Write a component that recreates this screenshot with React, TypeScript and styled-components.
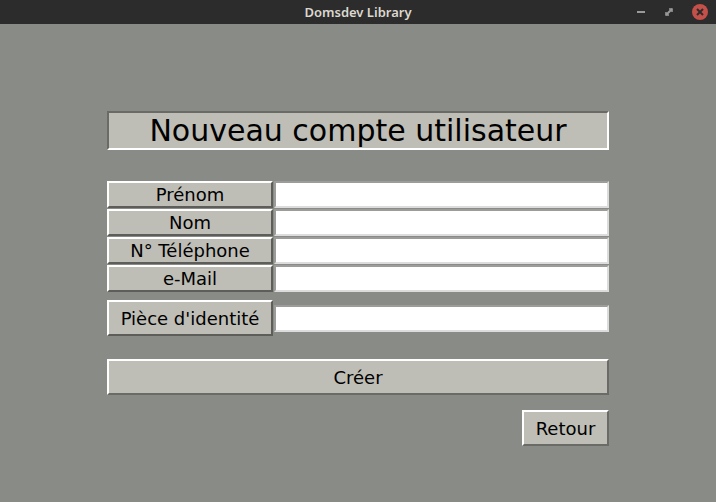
import styled, { createGlobalStyle } from "styled-components";

const GlobalStyle = createGlobalStyle`
  html, body {
    margin: 0;
    padding: 0;
    background: #898c86;
  }
  body {
    font-family: "DejaVu Sans", "Liberation Sans", sans-serif;
  }
`;

const Window = styled.div`
  width: 716px;
  height: 502px;
  display: flex;
  flex-direction: column;
  background: #898c86;
  overflow: hidden;
`;

const TitleBar = styled.div`
  height: 24px;
  background: #2c2c2c;
  display: flex;
  align-items: center;
  justify-content: center;
  position: relative;
  color: #dcd8d0;
  font-family: "Noto Sans", "DejaVu Sans", sans-serif;
  font-size: 13px;
  font-weight: 600;
`;

const Controls = styled.div`
  position: absolute;
  right: 8px;
  top: 0;
  height: 24px;
  display: flex;
  align-items: center;
  gap: 18px;
`;

const Main = styled.div`
  flex: 1;
  display: flex;
  flex-direction: column;
  padding: 87px 0 0 107px;
  width: 502px;
`;

const Heading = styled.div`
  height: 35px;
  border: 2px solid;
  border-color: #6a6b67 #ffffff #ffffff #6a6b67;
  background: #bebdb6;
  display: flex;
  align-items: center;
  justify-content: center;
  font-size: 30px;
  color: #000;
`;

const Fields = styled.div`
  display: flex;
  flex-direction: column;
  gap: 1px;
  margin-top: 31px;
`;

const Row = styled.div<{ $gapTop?: number }>`
  display: flex;
  align-items: center;
  gap: 1px;
  margin-top: ${(p) => p.$gapTop ?? 0}px;
`;

const Label = styled.div<{ $tall?: boolean }>`
  width: 162px;
  height: ${(p) => (p.$tall ? 32 : 23)}px;
  border: 2px solid;
  border-color: #ffffff #5d5e5a #5d5e5a #ffffff;
  background: #bebdb6;
  display: flex;
  align-items: center;
  justify-content: center;
  font-size: 18px;
  color: #000;
`;

const Entry = styled.input`
  flex: 1;
  box-sizing: border-box;
  height: 27px;
  border: 2px solid;
  border-color: #9c9c9a #dcdcdc #dcdcdc #9c9c9a;
  background: #ffffff;
  outline: none;
  padding: 0 4px;
  font-family: inherit;
  font-size: 15px;
`;

const Button = styled.div<{ $width?: number }>`
  width: ${(p) => (p.$width ? `${p.$width}px` : "auto")};
  height: 32px;
  border: 2px solid;
  border-color: #ffffff #6a6b67 #6a6b67 #ffffff;
  background: #bebdb6;
  display: flex;
  align-items: center;
  justify-content: center;
  font-size: 18px;
  color: #000;
`;

const CreateButton = styled(Button)`
  margin-top: 23px;
`;

const BackRow = styled.div`
  display: flex;
  justify-content: flex-end;
  margin-top: 15px;
`;

const labels = ["Prénom", "Nom", "N° Téléphone", "e-Mail"];

export default function App() {
  return (
    <Window>
      <GlobalStyle />
      <TitleBar>
        Domsdev Library
        <Controls>
          <svg width="10" height="10" viewBox="0 0 10 10">
            <rect x="1" y="4" width="8" height="2" fill="#9a9a9a" />
          </svg>
          <svg width="10" height="10" viewBox="0 0 10 10">
            <path d="M2 8 L8 2" stroke="#9a9a9a" strokeWidth="2" />
            <path d="M5 2 H8 V5" fill="none" stroke="#9a9a9a" strokeWidth="1.5" />
            <path d="M2 5 V8 H5" fill="none" stroke="#9a9a9a" strokeWidth="1.5" />
          </svg>
          <svg width="16" height="16" viewBox="0 0 16 16">
            <circle cx="8" cy="8" r="8" fill="#c4504a" />
            <path d="M5 5 L11 11 M11 5 L5 11" stroke="#2c2c2c" strokeWidth="2" />
          </svg>
        </Controls>
      </TitleBar>
      <Main>
        <Heading>Nouveau compte utilisateur</Heading>
        <Fields>
          {labels.map((l) => (
            <Row key={l}>
              <Label>{l}</Label>
              <Entry />
            </Row>
          ))}
        </Fields>
        <Row $gapTop={8}>
          <Label $tall>Pièce d'identité</Label>
          <Entry />
        </Row>
        <CreateButton>Créer</CreateButton>
        <BackRow>
          <Button $width={83}>Retour</Button>
        </BackRow>
      </Main>
    </Window>
  );
}
